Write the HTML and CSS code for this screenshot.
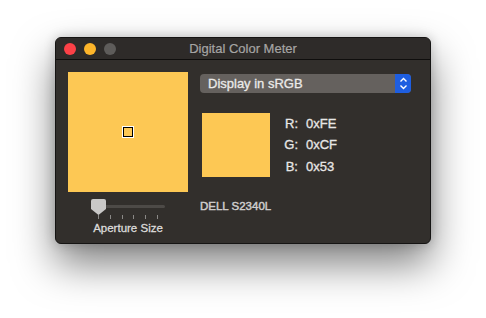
FILE: index.html
```html
<!DOCTYPE html>
<html lang="en">

<head>
  <meta charset="UTF-8" />
  <title>Digital Color Meter</title>
  <link rel="stylesheet" href="styles.css">
</head>

<body>
  <div class="window">
    <div class="titlebar">
      <div class="lights">
        <span class="light close"></span>
        <span class="light minimize"></span>
        <span class="light zoom"></span>
      </div>
      <div class="title">Digital Color Meter</div>
      <div></div>
    </div>

    <div class="content">
      <!-- Loupe and aperture slider -->
      <div class="left">
        <div class="loupe">
          <div class="aperture"></div>
        </div>
        <svg class="slider" width="120" height="22" viewBox="0 0 120 22">
          <rect x="25" y="8" width="72" height="3" rx="1.5" fill="#4d4a47" />
          <g stroke="#8a8886" stroke-width="1">
            <line x1="30.5" y1="18" x2="30.5" y2="22" />
            <line x1="42.5" y1="18" x2="42.5" y2="22" />
            <line x1="54.5" y1="18" x2="54.5" y2="22" />
            <line x1="65.5" y1="18" x2="65.5" y2="22" />
            <line x1="77.5" y1="18" x2="77.5" y2="22" />
            <line x1="89.5" y1="18" x2="89.5" y2="22" />
          </g>
          <path d="M25 2 H36 Q38 2 38 4 V12 L30.5 18 L23 12 V4 Q23 2 25 2 Z" fill="#c9c8c7" />
        </svg>
        <div class="slider-label">Aperture Size</div>
      </div>

      <!-- Readout -->
      <div class="right">
        <div class="popup">
          <span class="popup-text">Display in sRGB</span>
          <span class="popup-arrows">
            <svg width="9" height="13" viewBox="0 0 9 13">
              <path d="M1.5 4.5 L4.5 1.5 L7.5 4.5 M1.5 8.5 L4.5 11.5 L7.5 8.5" fill="none" stroke="#fff"
                stroke-width="1.4" />
            </svg>
          </span>
        </div>
        <div class="readout">
          <div class="sample"></div>
          <div class="values">
            <span class="label">R:</span><span class="value">0xFE</span>
            <span class="label">G:</span><span class="value">0xCF</span>
            <span class="label">B:</span><span class="value">0x53</span>
          </div>
        </div>
        <div class="display-name">DELL S2340L</div>
      </div>
    </div>
  </div>
</body>

</html>
```

FILE: styles.css
```css
/* Page */
body {
  margin: 0;
  min-height: 318px;
  background-color: #fff;
  font-family: "Liberation Sans", Arial, sans-serif;
}

/* Window */
.window {
  width: 374px;
  height: 205px;
  margin: 37px 0 0 55px;
  background-color: #322f2c;
  border: 1px solid #151413;
  border-radius: 6px;
  box-shadow: 0 20px 40px rgba(0, 0, 0, 0.5), 0 0 12px rgba(0, 0, 0, 0.2);
  overflow: hidden;
}

/* Title bar */
.titlebar {
  height: 21px;
  display: grid;
  grid-template-columns: 1fr auto 1fr;
  align-items: center;
  background-color: #2e2b29;
  border-bottom: 1px solid #0f0e0d;
}

.lights {
  display: flex;
  gap: 8px;
  padding-left: 8px;
}

.light {
  width: 12px;
  height: 12px;
  border-radius: 50%;
}

.close {
  background-color: #fc4147;
}

.minimize {
  background-color: #fdb52a;
}

.zoom {
  background-color: #5e5c5a;
}

.title {
  color: #a6a5a4;
  font-size: 13px;
  -webkit-text-stroke: 0.2px #a6a5a4;
}

/* Content */
.content {
  display: flex;
  gap: 12px;
  padding: 12px 0 0 12px;
}

.left {
  width: 120px;
  display: flex;
  flex-direction: column;
  align-items: center;
}

.loupe {
  width: 120px;
  height: 120px;
  background-color: #fdc854;
  display: flex;
  justify-content: center;
  align-items: center;
}

.aperture {
  width: 8px;
  height: 8px;
  border: 1px solid #000;
  box-shadow: 0 0 0 1px #fff;
}

.slider {
  display: block;
  margin-top: 5px;
}

.slider-label {
  margin-top: 3px;
  color: #dcdbda;
  font-size: 11.5px;
  line-height: 13px;
  -webkit-text-stroke: 0.3px #dcdbda;
}

.right {
  width: 211px;
}

/* Popup button */
.popup {
  margin-top: 2px;
  height: 19px;
  display: flex;
  background-color: #65615e;
  border-radius: 4px;
  overflow: hidden;
}

.popup-text {
  flex: 1;
  padding-left: 8px;
  color: #ebeae9;
  font-size: 13px;
  line-height: 19px;
  -webkit-text-stroke: 0.3px #ebeae9;
}

.popup-arrows {
  width: 16px;
  display: flex;
  justify-content: center;
  align-items: center;
  background-color: #1e5ee0;
}

/* Color sample and values */
.readout {
  display: flex;
  margin-top: 20px;
  padding-left: 2px;
}

.sample {
  width: 68px;
  height: 64px;
  background-color: #fdc854;
}

.values {
  display: grid;
  grid-template-columns: 28px auto;
  column-gap: 8px;
  color: #e8e7e6;
  font-size: 13px;
  line-height: 21px;
  -webkit-text-stroke: 0.3px #e8e7e6;
}

.label {
  text-align: right;
}

.display-name {
  margin-top: 23px;
  color: #cfcecd;
  font-size: 11.5px;
  line-height: 13px;
  -webkit-text-stroke: 0.45px #cfcecd;
}
```
